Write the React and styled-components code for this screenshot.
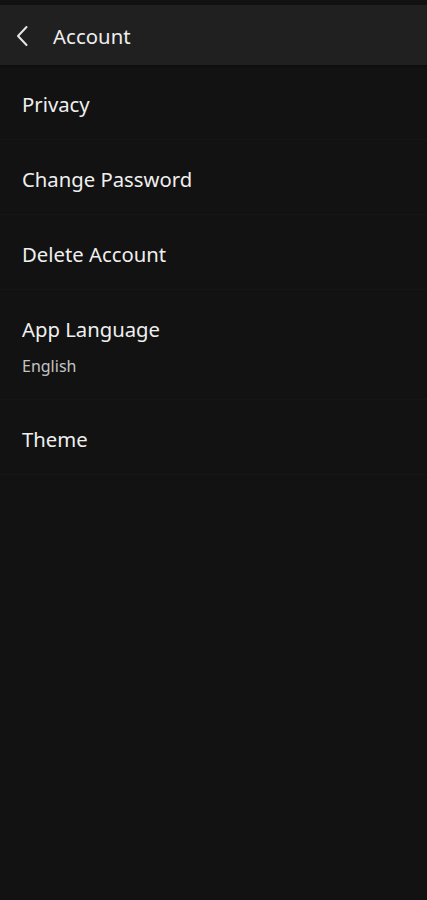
import React from 'react';
import styled, { createGlobalStyle } from 'styled-components';

const Global = createGlobalStyle`
  html, body {
    margin: 0;
    padding: 0;
    background: #121212;
  }
  body {
    font-family: "Noto Sans", "Open Sans", sans-serif;
  }
`;

const Page = styled.div`
  width: 427px;
  min-height: 900px;
  background: #121212;
  padding-top: 5px;
  box-sizing: border-box;
`;

const Header = styled.header`
  height: 60px;
  background: #202020;
  display: flex;
  align-items: center;
  padding: 2px 0 0 10px;
  box-sizing: border-box;
  box-shadow: 0 1px 2px rgba(0, 0, 0, 0.4);
`;

const BackButton = styled.button`
  width: 24px;
  height: 30px;
  padding: 0;
  border: none;
  background: none;
  display: flex;
  align-items: center;
  justify-content: center;
  margin-right: 19px;
`;

const Title = styled.h1`
  margin: 0;
  font-size: 20.3px;
  font-weight: 400;
  color: #eeeeee;
  letter-spacing: 0.1px;
`;

const List = styled.ul`
  list-style: none;
  margin: 0;
  padding: 0;
`;

const Item = styled.li`
  display: flex;
  flex-direction: column;
  justify-content: center;
  padding: 3px 22px 0;
  height: ${props => (props.tall ? '110px' : '75px')};
  border-bottom: 1px solid #161616;
  box-sizing: border-box;
`;

const Label = styled.span`
  font-size: 20.3px;
  color: #efefef;
  line-height: 26px;
`;

const Sub = styled.span`
  font-size: 16px;
  color: #c4c4c4;
  margin-top: 14px;
  line-height: 20px;
`;

const items = [
  { label: 'Privacy' },
  { label: 'Change Password' },
  { label: 'Delete Account' },
  { label: 'App Language', sub: 'English' },
  { label: 'Theme' },
];

function App() {
  return (
    <Page>
      <Global />
      <Header>
        <BackButton aria-label="Back">
          <svg width="14" height="22" viewBox="0 0 14 22" fill="none">
            <path d="M11.5 2 L3 11 L11.5 20" stroke="#e6e6e6" strokeWidth="2" strokeLinecap="round" strokeLinejoin="round" />
          </svg>
        </BackButton>
        <Title>Account</Title>
      </Header>
      <List>
        {items.map((it, index) => (
          <Item key={index} tall={it.sub ? 1 : 0}>
            <Label>{it.label}</Label>
            {it.sub && <Sub>{it.sub}</Sub>}
          </Item>
        ))}
      </List>
    </Page>
  );
}

export default App;
